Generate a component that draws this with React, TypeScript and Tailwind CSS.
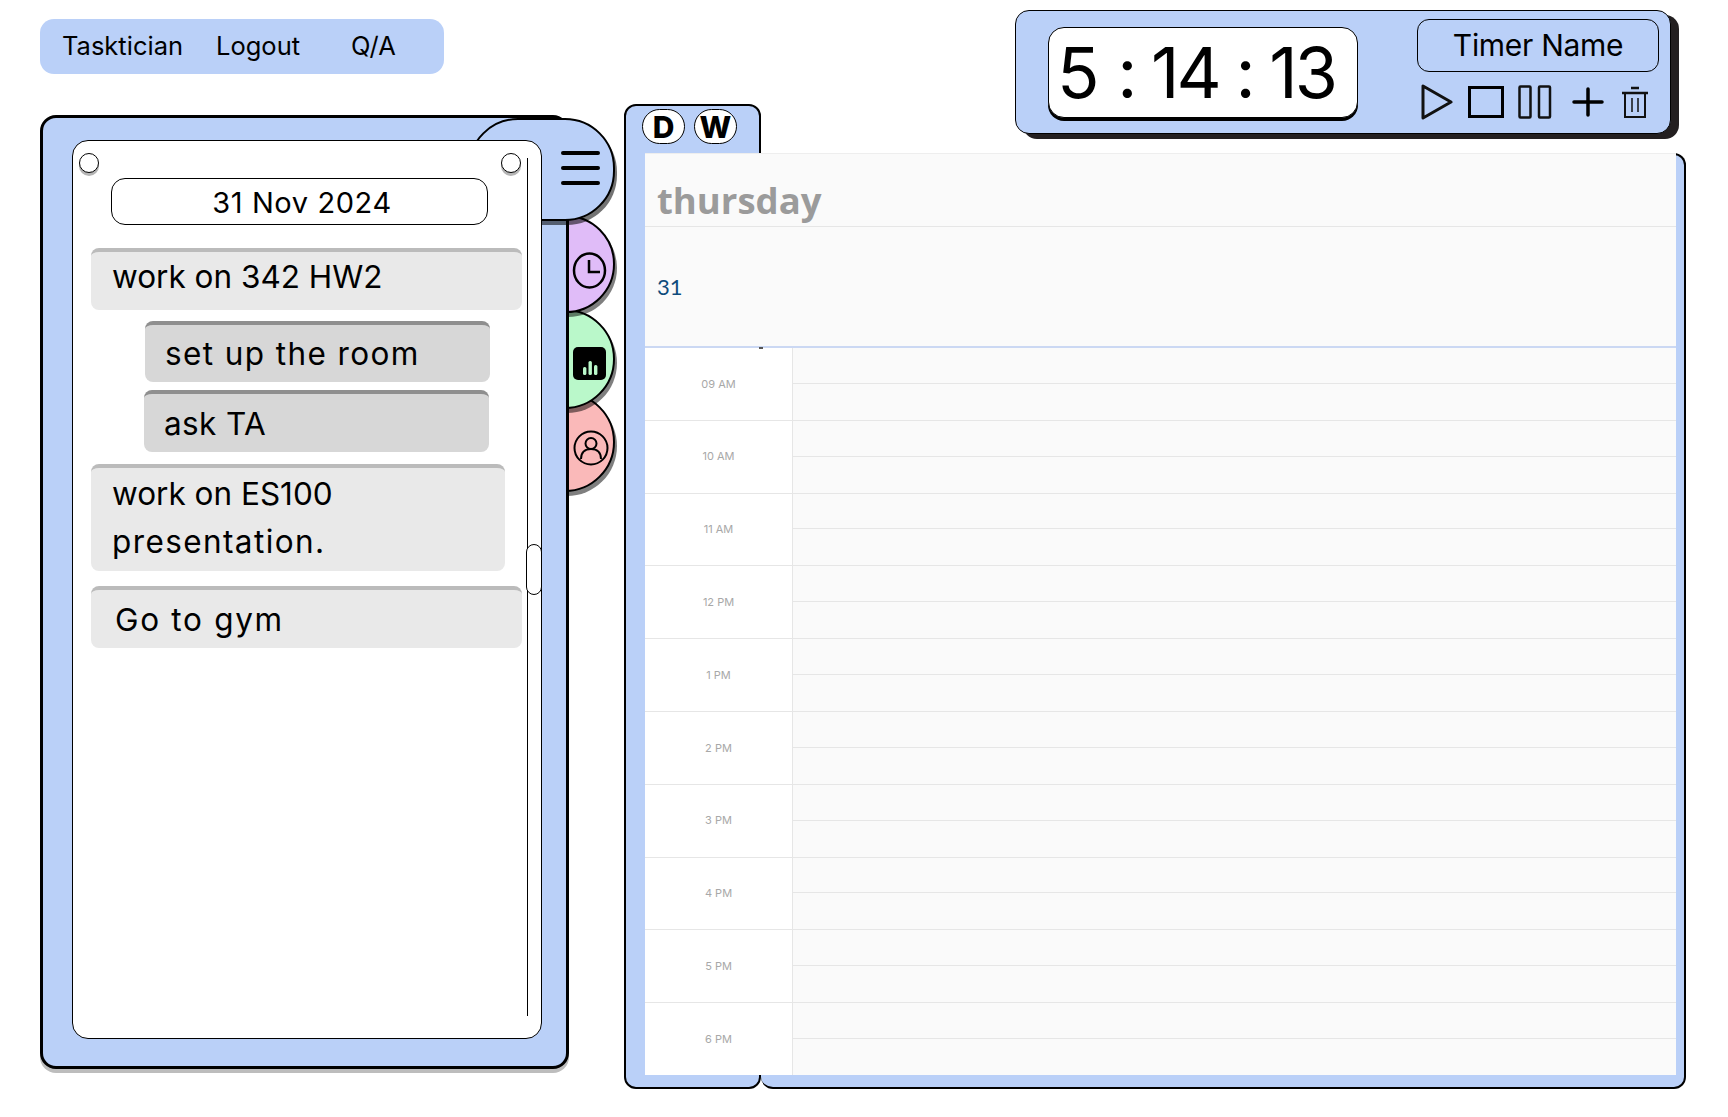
const font = "font-['Inter','Liberation_Sans',sans-serif]";

const hours = ["09 AM", "10 AM", "11 AM", "12 PM", "1 PM", "2 PM", "3 PM", "4 PM", "5 PM", "6 PM"];

function Task({ children, sub, className }: { children: React.ReactNode; sub?: boolean; className: string }) {
  return (
    <div
      className={`rounded-lg border-t-[4px] text-[31.5px] leading-[48px] text-black ${
        sub ? "border-[#8f8f8f] bg-[#d7d7d7]" : "border-[#bbbbbb] bg-[#e9e9e9]"
      } ${className}`}
    >
      {children}
    </div>
  );
}

function SideTabs() {
  return (
    <div className="absolute left-[475px] top-[100px] z-0 flex w-[100px] flex-col">
      <div className="relative z-[3] flex h-[98px] w-[100px] items-center justify-end rounded-full border-2 border-black bg-[#e0bcf8] pr-[6px] pt-[12px] shadow-[2px_4px_0_rgba(0,0,0,0.5)]">
        <svg width="35" height="37" viewBox="0 0 35 37" fill="none" stroke="black" strokeWidth="2.5">
          <ellipse cx="17.5" cy="18.5" rx="15.5" ry="17" />
          <path d="M17 8v12h11" />
        </svg>
      </div>
      <div className="relative z-[2] -mt-[4px] flex h-[100px] w-[100px] items-center justify-end rounded-full border-2 border-black bg-[#baf8ca] pr-[7px] pt-[8px] shadow-[2px_4px_0_rgba(0,0,0,0.5)]">
        <svg width="33" height="33" viewBox="0 0 33 33">
          <rect width="33" height="33" rx="5" fill="black" />
          <rect x="10" y="20" width="3.4" height="8" rx="1.5" fill="#baf8ca" />
          <rect x="15.5" y="14" width="3.4" height="14" rx="1.5" fill="#baf8ca" />
          <rect x="21" y="18" width="3.4" height="10" rx="1.5" fill="#baf8ca" />
        </svg>
      </div>
      <div className="relative z-[1] -mt-[17px] flex h-[100px] w-[100px] items-center justify-end rounded-full border-2 border-black bg-[#fab9b9] pr-[4px] pt-[12px] shadow-[2px_4px_0_rgba(0,0,0,0.5)]">
        <svg width="36" height="36" viewBox="0 0 36 36" fill="none" stroke="black" strokeWidth="2">
          <circle cx="18" cy="18" r="16.5" />
          <circle cx="18" cy="13.5" r="5.5" />
          <path d="M8 29c0-6.5 4-10 10-10s10 3.500 10 10" />
        </svg>
      </div>
    </div>
  );
}

function LeftPanel() {
  return (
    <div className="relative isolate mt-[41px] h-[954px] w-[529px]">
      <SideTabs />
      <div className="relative h-full w-full rounded-[16px] border-[3px] border-black bg-[#bad0f8] pl-[29px] pt-[22px] shadow-[0_4px_0_#bdbdbd]">
        <div className="relative z-30 flex h-[899px] w-[470px] flex-col rounded-[16px] border border-black bg-white">
          <div className="absolute left-[6px] top-[12px] h-[20px] w-[20px] rounded-full border border-black bg-white shadow-[0_3px_0_#b5b5b5]" />
          <div className="absolute left-[428px] top-[12px] h-[20px] w-[20px] rounded-full border border-black bg-white shadow-[0_3px_0_#b5b5b5]" />
          <div className="absolute left-[454px] top-[17px] h-[858px] w-px bg-black" />
          <div className="absolute left-[453px] top-[403px] h-[51px] w-[16px] rounded-full border border-black bg-white" />
          <div className="ml-[38px] mt-[37px] flex h-[47px] w-[377px] items-center justify-center rounded-[14px] border border-black pl-[5px] pt-[2px] text-[29px] tracking-[0.6px]">
            31 Nov 2024
          </div>
          <Task className="ml-[18px] mt-[23px] h-[62px] w-[431px] pl-[21px] pt-[1px]">work on 342 HW2</Task>
          <Task sub className="ml-[72px] mt-[11px] h-[61px] w-[345px] pl-[20px] pt-[5px] tracking-[1.4px]">set up the room</Task>
          <Task sub className="ml-[71px] mt-[8px] h-[62px] w-[345px] pl-[20px] pt-[6px] tracking-[0.4px]">ask TA</Task>
          <Task className="ml-[18px] mt-[12px] h-[107px] w-[414px] pl-[21px] pt-[2px] leading-[47px]">
            work on ES100
            <br />
            <span className="tracking-[1.4px]">presentation.</span>
          </Task>
          <Task className="ml-[18px] mt-[15px] h-[62px] w-[431px] pl-[24px] pt-[6px] tracking-[1.7px]">Go to gym</Task>
        </div>
      </div>
      <div className="absolute left-[428px] top-[3px] z-20 flex h-[103px] w-[147px] items-center justify-end rounded-[50px] border-2 border-black bg-[#bad0f8] pb-[3px] pr-[13px] shadow-[2px_4px_0_rgba(0,0,0,0.55)]">
        <div className="flex w-[39px] flex-col gap-[11px]">
          <div className="h-[4px] rounded-full bg-black" />
          <div className="h-[4px] rounded-full bg-black" />
          <div className="h-[4px] rounded-full bg-black" />
        </div>
      </div>
    </div>
  );
}

function TimerIcons() {
  return (
    <div className="mt-[12px] flex h-[36px] items-center">
      <svg className="ml-[4px]" width="32" height="36" viewBox="0 0 32 36" fill="none" stroke="#111" strokeWidth="3" strokeLinejoin="round">
        <path d="M2 2v32l28-16z" />
      </svg>
      <svg className="ml-[15px]" width="36" height="32" viewBox="0 0 36 32" fill="none" stroke="black" strokeWidth="3">
        <rect x="1.5" y="1.5" width="33" height="29" />
      </svg>
      <svg className="ml-[14px]" width="34" height="34" viewBox="0 0 34 34" fill="none" stroke="#111" strokeWidth="2.5">
        <rect x="1.5" y="1.5" width="11" height="31" rx="1" />
        <rect x="21" y="1.5" width="11" height="31" rx="1" />
      </svg>
      <svg className="ml-[20px]" width="32" height="30" viewBox="0 0 32 30" fill="none" stroke="black" strokeWidth="3.5" strokeLinecap="round">
        <path d="M16 2v26M2 15h28" />
      </svg>
      <svg className="ml-[17px] mt-[1px]" width="28" height="33" viewBox="0 0 28 33" fill="none" stroke="#111" strokeWidth="2">
        <path d="M1 7h26M10 2h8" strokeWidth="2.5" />
        <path d="M4 7v24h20V7" />
        <path d="M11 12v14M17 12v14" strokeWidth="1.500" />
      </svg>
    </div>
  );
}

function Timer() {
  return (
    <div className="ml-[391px] mt-[10px] flex h-[124px] w-[656px] rounded-[14px] border-[1.5px] border-black bg-[#bad0f8] pl-[32px] shadow-[8px_5px_0_#231f20]">
      <div className="mt-[16px] flex h-[91px] w-[310px] items-center whitespace-pre rounded-[16px] border border-black bg-white pl-[8px] text-[70px] font-normal leading-none tracking-[-3px] text-black shadow-[0_3px_0_#000]">
        <span className="mr-[4px]">5</span>
        <span>{" : 14 : 13"}</span>
      </div>
      <div className="ml-[59px] mt-[8px] flex w-[242px] flex-col">
        <div className="flex h-[53px] w-[242px] items-center justify-center rounded-[12px] border border-black text-[30px] font-normal tracking-[-0.3px] text-black">
          Timer Name
        </div>
        <TimerIcons />
      </div>
    </div>
  );
}

function Schedule() {
  return (
    <div className="absolute bottom-[14px] left-[21px] right-[10px] top-[49px] flex flex-col border-t border-[#eeeeee] bg-[#fafafa]">
      <div className="flex h-[73px] items-end border-b border-[#e6e6e6] pl-[12px] font-['Open_Sans',sans-serif] text-[36.500px] font-bold leading-[52px] text-[#9b9b9b]">
        thursday
      </div>
      <div className="flex h-[121px] items-center border-b-2 border-[#cbd8f3] pb-[1px] pl-[12px] font-['Lato',sans-serif] text-[22px] text-[#0f4c7c]">
        31
      </div>
      <div className="flex flex-1 flex-col">
        {hours.map((h, i) => (
          <div key={h} className={`flex flex-1 ${i ? "border-t border-[#e6e6e6]" : ""}`}>
            <div className="flex w-[148px] items-center justify-center border-r border-[#e6e6e6] bg-white text-[11px] text-[#a8a8a8]">
              {h}
            </div>
            <div className="flex flex-1 flex-col">
              <div className="h-1/2 border-b border-[#e6e6e6]" />
            </div>
          </div>
        ))}
      </div>
    </div>
  );
}

function Calendar() {
  return (
    <div className="relative -mt-[30px] flex h-[985px] w-[1062px]">
      <div className="flex h-full w-[137px] gap-[9px] rounded-[12px] border-2 border-black bg-[#bad0f8] pl-[16px] pt-[3px]">
        <div className="flex h-[35px] w-[43px] items-center justify-center rounded-full border border-black bg-white text-[30px] font-extrabold leading-none">D</div>
        <div className="flex h-[35px] w-[43px] items-center justify-center rounded-full border border-black bg-white text-[30px] font-extrabold leading-none">W</div>
      </div>
      <div className="mt-[49px] flex-1 rounded-[12px] border-2 border-l-0 border-black bg-[#bad0f8]" />
      <Schedule />
      <div className="absolute left-[135px] top-[243px] h-[1.5px] w-[4px] bg-[#555555]" />
    </div>
  );
}

export default function App() {
  return (
    <div className={`flex h-[1117px] w-[1728px] overflow-hidden bg-white text-black ${font}`}>
      <div className="ml-[40px] mt-[19px] flex w-[529px] flex-col">
        <div className="flex h-[55px] w-[404px] items-center rounded-[14px] bg-[#bad0f8] pl-[22px] text-[25.500px]">
          <span>Tasktician</span>
          <span className="ml-[33px]">Logout</span>
          <span className="ml-[51px]">Q/A</span>
        </div>
        <LeftPanel />
      </div>
      <div className="ml-[55px] flex w-[1062px] flex-col">
        <Timer />
        <Calendar />
      </div>
    </div>
  );
}
